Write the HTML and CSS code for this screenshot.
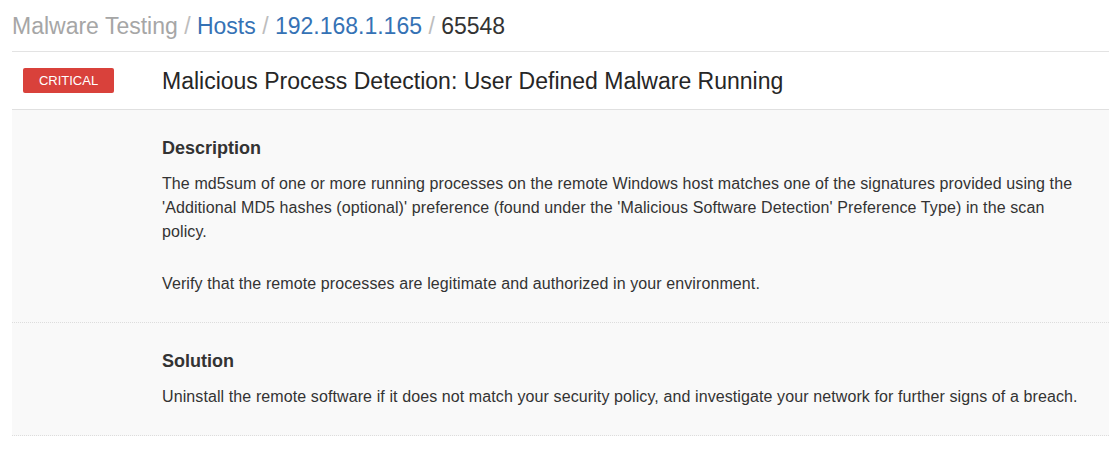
FILE: index.html
```html
<!DOCTYPE html>
<html>
<head>
<meta charset="utf-8">
<link rel="stylesheet" href="styles.css">
</head>
<body>
<div class="page">
  <div class="breadcrumb">
    <span class="crumb-muted">Malware Testing</span>
    <span class="sep">/</span>
    <a class="crumb-link" href="#">Hosts</a>
    <span class="sep">/</span>
    <a class="crumb-link" href="#">192.168.1.165</a>
    <span class="sep">/</span>
    <span class="crumb-current">65548</span>
  </div>
  <div class="header-row">
    <div class="left-col">
      <span class="badge">CRITICAL</span>
    </div>
    <h1 class="title">Malicious Process Detection: User Defined Malware Running</h1>
  </div>
  <div class="details">
    <div class="section">
      <div class="left-col"></div>
      <div class="section-body">
        <h2 class="section-title">Description</h2>
        <p class="para">The md5sum of one or more running processes on the remote Windows host matches one of the signatures provided using the 'Additional MD5 hashes (optional)' preference (found under the 'Malicious Software Detection' Preference Type) in the scan policy.</p>
        <p class="para">Verify that the remote processes are legitimate and authorized in your environment.</p>
      </div>
    </div>
    <div class="section">
      <div class="left-col"></div>
      <div class="section-body">
        <h2 class="section-title">Solution</h2>
        <p class="para">Uninstall the remote software if it does not match your security policy, and investigate your network for further signs of a breach.</p>
      </div>
    </div>
  </div>
</div>
</body>
</html>
```

FILE: styles.css
```css
html, body {
  margin: 0;
  padding: 0;
  background: #ffffff;
}
body {
  font-family: "Liberation Sans", Arial, Helvetica, sans-serif;
  color: #333333;
}
.page {
  padding-left: 12px;
}
.breadcrumb {
  padding: 11px 0 10px 0;
  line-height: 30px;
  font-size: 23px;
  border-bottom: 1px solid #e3e3e3;
  white-space: nowrap;
}
.crumb-muted {
  color: #a6a6a6;
}
.sep {
  color: #bdbdbd;
}
.crumb-link {
  color: #3572b5;
  text-decoration: none;
}
.crumb-current {
  color: #333333;
}
.header-row {
  display: flex;
  align-items: center;
  height: 57px;
  border-bottom: 1px solid #e0e0e0;
}
.left-col {
  width: 150px;
  flex: 0 0 150px;
  box-sizing: border-box;
  padding-left: 11px;
}
.badge {
  display: inline-block;
  width: 91px;
  height: 25px;
  line-height: 25px;
  text-align: center;
  background: #d9413b;
  color: #ffffff;
  font-size: 13px;
  border-radius: 2px;
  vertical-align: middle;
}
.title {
  margin: 0;
  font-size: 23px;
  font-weight: normal;
  color: #262626;
  line-height: 30px;
  padding-top: 1px;
}
.details {
  background: #f9f9f9;
}
.section {
  display: flex;
  padding: 27px 0 26px 0;
  border-bottom: 1px dotted #dddddd;
}
.section-body {
  flex: 1;
  padding-right: 20px;
}
.section-title {
  margin: 0 0 13px 0;
  font-size: 18px;
  line-height: 22px;
  font-weight: bold;
  color: #333333;
}
.para {
  margin: 0 0 28px 0;
  font-size: 16px;
  letter-spacing: 0.1px;
  line-height: 24px;
  color: #333333;
}
.para:last-child {
  margin-bottom: 0;
}
```
